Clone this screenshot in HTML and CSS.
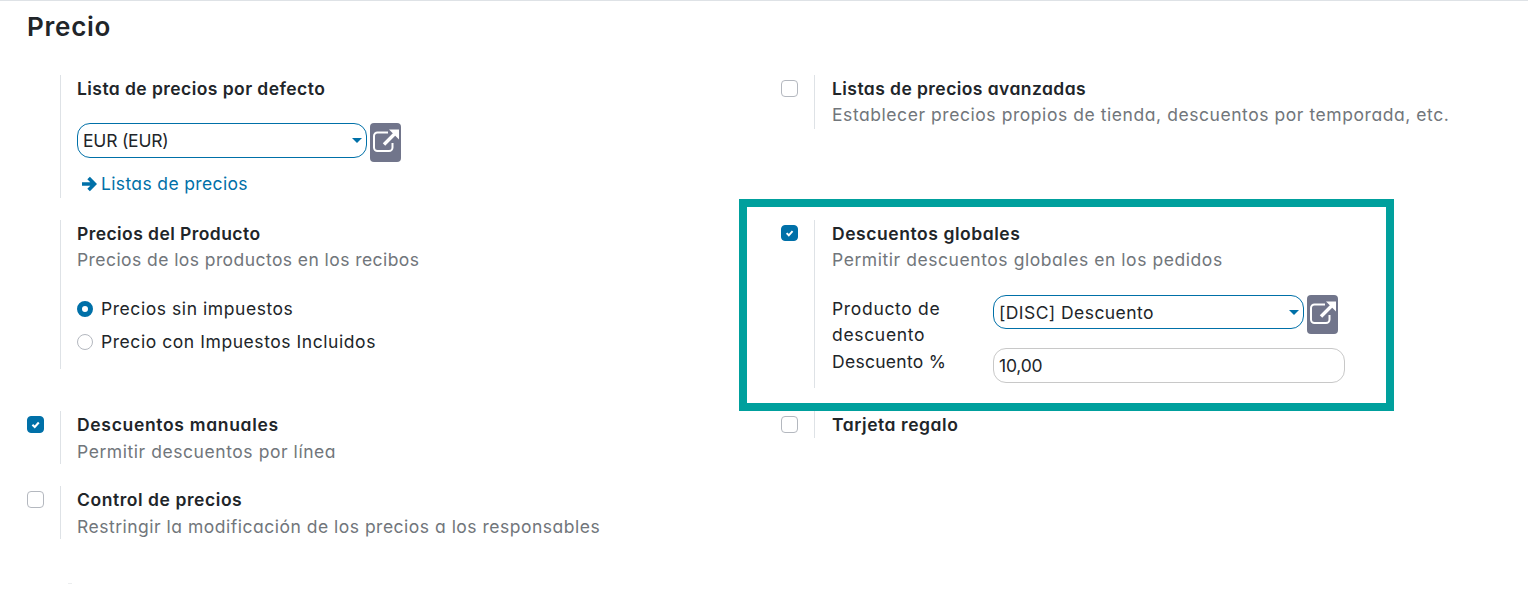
FILE: index.html
```
<!DOCTYPE html>
<html lang="es">
<head>
<meta charset="utf-8">
<title>Precio</title>
<link rel="stylesheet" href="styles.css">
</head>
<body>
<svg class="symbols" aria-hidden="true">
  <symbol id="external" viewBox="0 0 31 39">
    <path d="M18 9.500H7.500a3.500 3.500 0 0 0-3.500 3.500V24.500a3.500 3.500 0 0 0 3.500 3.500H19a3.500 3.500 0 0 0 3.500-3.500V20" fill="none" stroke="#fff" stroke-width="2"/>
    <path d="M14 21.500L25 10.500" fill="none" stroke="#fff" stroke-width="3.400"/>
    <path d="M19 6.500H29V16.500Z" fill="#fff"/>
  </symbol>
  <symbol id="arrow" viewBox="0 0 16 16">
    <path d="M1 8H13M7.600 2L13.500 8L7.600 14" fill="none" stroke="currentColor" stroke-width="3.600"/>
  </symbol>
  <symbol id="tick" viewBox="0 0 16 16">
    <path d="M4.700 8.200L7.200 10.600L11.500 5.800" fill="none" stroke="#fff" stroke-width="2.200"/>
  </symbol>
</svg>
<main class="settings">
  <h2 class="section-title">Precio</h2>
  <div class="grid">
    <section class="setting tall">
      <div class="toggle"></div>
      <div class="body">
        <h3 class="track-s">Lista de precios por defecto</h3>
        <div class="field-row pricelist">
          <div class="select"><span class="tight">EUR (EUR)</span><i class="caret"></i></div>
          <button class="open" aria-label="Abrir"><svg><use href="#external"/></svg></button>
        </div>
        <a class="link"><svg><use href="#arrow"/></svg><span>Listas de precios</span></a>
      </div>
    </section>
    <section class="setting">
      <div class="toggle"><div class="check"></div></div>
      <div class="body">
        <h3 class="track-s">Listas de precios avanzadas</h3>
        <p class="hint track-m">Establecer precios propios de tienda, descuentos por temporada, etc.</p>
      </div>
    </section>
    <section class="setting product-prices">
      <div class="toggle"></div>
      <div class="body">
        <h3 class="track-s">Precios del Producto</h3>
        <p class="hint track-s">Precios de los productos en los recibos</p>
        <div class="radios">
          <div class="option track-m"><i class="radio on"></i><span>Precios sin impuestos</span></div>
          <div class="option track-m"><i class="radio"></i><span>Precio con Impuestos Incluidos</span></div>
        </div>
      </div>
    </section>
    <section class="setting global">
      <div class="highlight"></div>
      <div class="toggle"><div class="check on"><svg><use href="#tick"/></svg></div></div>
      <div class="body">
        <h3 class="track-m">Descuentos globales</h3>
        <p class="hint track-m">Permitir descuentos globales en los pedidos</p>
        <div class="fields">
          <div class="labels">
            <div class="track-l">Producto de<br>descuento</div>
            <div class="track-xs">Descuento %</div>
          </div>
          <div class="inputs">
            <div class="field-row">
              <div class="select product"><span class="track-s">[DISC] Descuento</span><i class="caret"></i></div>
              <button class="open" aria-label="Abrir"><svg><use href="#external"/></svg></button>
            </div>
            <div class="input"><span class="tight">10,00</span></div>
          </div>
        </div>
      </div>
    </section>
    <section class="setting spaced">
      <div class="toggle"><div class="check on"><svg><use href="#tick"/></svg></div></div>
      <div class="body">
        <h3 class="track-l">Descuentos manuales</h3>
        <p class="hint track-m">Permitir descuentos por línea</p>
      </div>
    </section>
    <section class="setting">
      <div class="toggle"><div class="check"></div></div>
      <div class="body"><h3 class="track-m">Tarjeta regalo</h3></div>
    </section>
    <section class="setting spaced">
      <div class="toggle"><div class="check"></div></div>
      <div class="body">
        <h3 class="track-m">Control de precios</h3>
        <p class="hint track-r">Restringir la modificación de los precios a los responsables</p>
      </div>
    </section>
  </div>
  <div class="mark"></div>
</main>
</body>
</html>
```
FILE: styles.css
```
* { box-sizing: border-box; }
body {
  margin: 0;
  background: #fff;
  color: #212529;
  font: 17.5px/26.25px Inter, "Open Sans", sans-serif;
  font-feature-settings: "cv11";
}
h2, h3, p { margin: 0; }
.symbols { position: absolute; width: 0; height: 0; }
.tight { letter-spacing: -.2px; }
.track-xs { letter-spacing: .28px; }
.track-s { letter-spacing: .43px; }
.track-r { letter-spacing: .5px; }
.track-m { letter-spacing: .56px; }
.track-l { letter-spacing: .68px; }
.settings { height: 595px; border-top: 1px solid #dee2e6; padding: 10px 0 0 27px; overflow: hidden; }
.section-title { font-size: 26px; line-height: 32px; font-weight: 600; letter-spacing: .75px; }
.grid { display: grid; grid-template-columns: 754px 740px; grid-template-rows: 145px 191px 75px 54px; margin-top: 32px; align-items: start; }
.setting { display: flex; position: relative; }
.tall { height: 123px; }
.toggle { width: 33px; padding-top: 5px; flex: none; }
.body { flex: 1; border-left: 1px solid #dee2e6; padding: 1px 0 0 16px; align-self: stretch; }
.setting:nth-child(even) .body { padding-left: 17px; }
h3 { font-size: 17.5px; line-height: 26.25px; font-weight: 600; }
.hint { color: #71767b; }
.spaced { height: 53px; }
.spaced .hint { margin-top: .75px; }
.check { width: 17px; height: 17px; border: 1px solid #b4b8bf; border-radius: 4px; }
.check.on { background: #0070a8; border-color: #0070a8; }
.check svg { display: block; width: 15px; height: 15px; }
.global .check { height: 16px; }
.global .check svg { height: 14px; }
.field-row { display: flex; gap: 3px; }
.pricelist { margin-top: 21px; }
.select, .input { height: 35px; border: 1px solid #0070a8; border-radius: 13px; padding: 0 4px 0 5px; display: flex; align-items: center; justify-content: space-between; }
.select { width: 290px; }
.select.product { width: 311px; height: 34px; padding-top: 2px; }
.product .caret { margin-bottom: 1px; }
.input { width: 352px; margin-top: 14px; border-color: #c8c8c8; padding-top: 1px; }
.caret { border: 5px solid transparent; border-top-color: #0070a8; border-bottom: 0; }
.open { width: 31px; height: 39px; border: 0; border-radius: 4px; background: #71758b; padding: 0; }
.open svg { display: block; width: 31px; height: 39px; }
.link { display: flex; align-items: center; color: #0070a8; margin-top: 9px; padding-left: 4px; letter-spacing: .36px; }
.link svg { width: 16px; height: 16px; margin-right: 4px; }
.product-prices { height: 149px; }
.radios { margin-top: 22px; display: grid; gap: 7px; }
.option { display: flex; align-items: center; gap: 8px; }
.radio { width: 16px; height: 16px; border: 1px solid #b4b8bf; border-radius: 50%; }
.radio.on { border: 5px solid #0070a8; }
.global { height: 168px; }
.highlight { position: absolute; left: -42px; top: -21px; width: 655px; height: 212px; border: 8px solid #00a09d; z-index: 1; }
.fields { display: flex; margin-top: 21.5px; }
.labels { width: 161px; padding-top: 1px; }
.mark { width: 4px; height: 1px; margin: 43px 0 0 41px; background: #eceeef; }
```
